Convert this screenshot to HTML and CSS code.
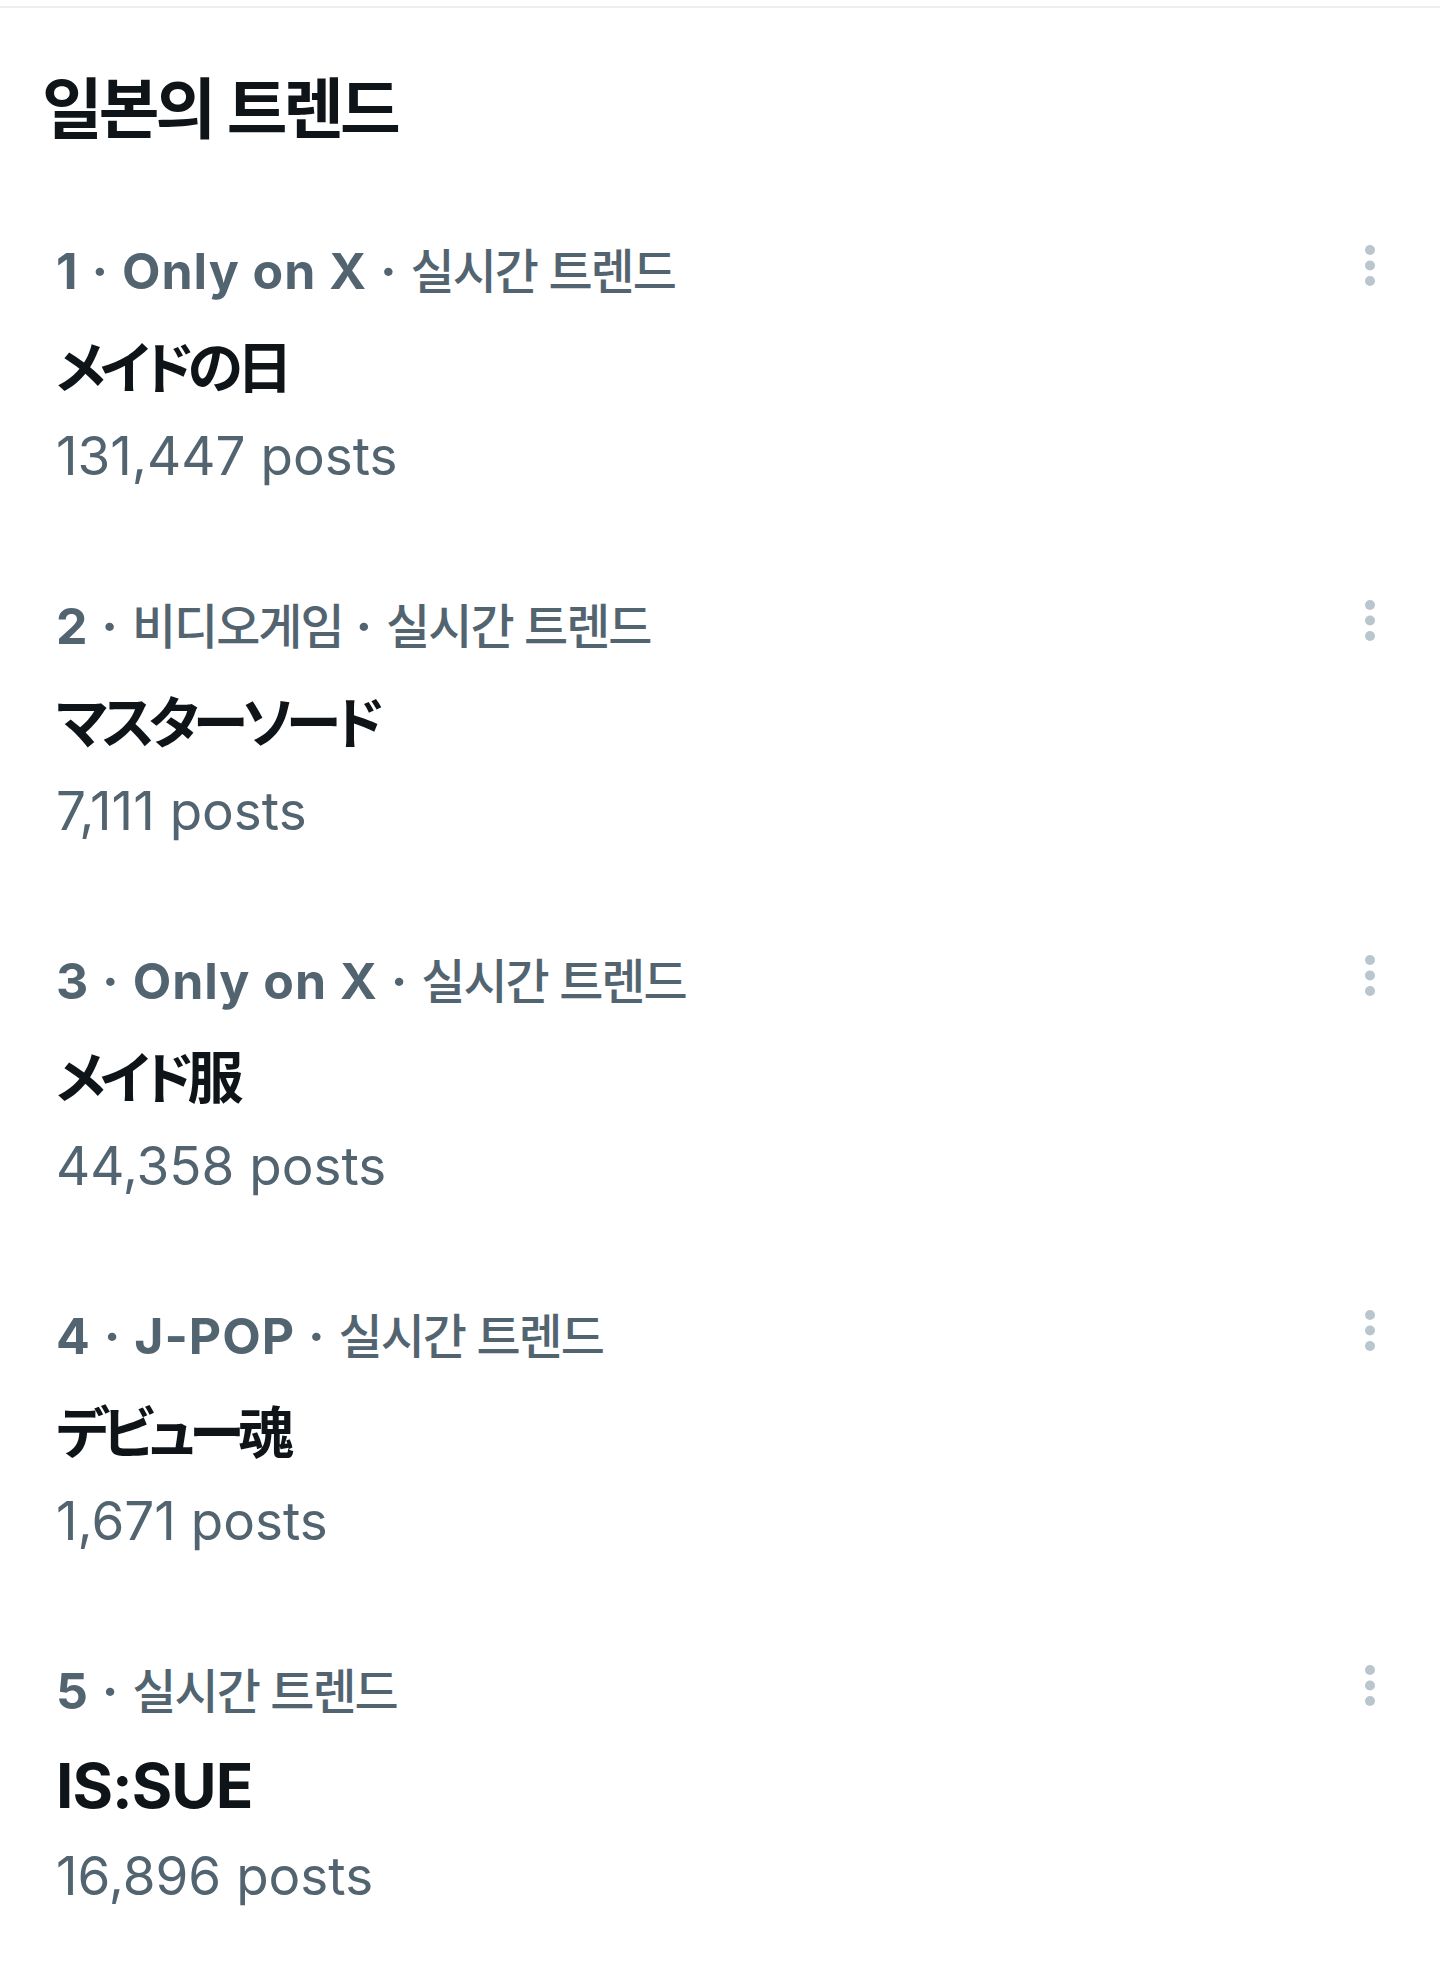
FILE: index.html
```html
<!DOCTYPE html>
<html lang="ko">
<head>
<meta charset="utf-8">
<title>일본의 트렌드</title>
<link rel="stylesheet" href="styles.css">
</head>
<body>
<div class="divider"></div>
<h2 class="heading">일본의 트렌드</h2>
<div class="list">
  <div class="trend">
    <div class="info">
      <div class="meta">1 · Only on X · <span class="ko">실시간 트렌드</span></div>
      <div class="title"><span class="jp">メイドの日</span></div>
      <div class="count">131,447 posts</div>
    </div>
    <svg class="more" viewBox="0 0 20 42" width="20" height="42"><circle cx="10" cy="5" r="5"/><circle cx="10" cy="20.5" r="5"/><circle cx="10" cy="36" r="5"/></svg>
  </div>
  <div class="trend">
    <div class="info">
      <div class="meta">2 · <span class="ko">비디오게임</span> · <span class="ko">실시간 트렌드</span></div>
      <div class="title"><span class="jp">マスターソード</span></div>
      <div class="count">7,111 posts</div>
    </div>
    <svg class="more" viewBox="0 0 20 42" width="20" height="42"><circle cx="10" cy="5" r="5"/><circle cx="10" cy="20.5" r="5"/><circle cx="10" cy="36" r="5"/></svg>
  </div>
  <div class="trend">
    <div class="info">
      <div class="meta">3 · Only on X · <span class="ko">실시간 트렌드</span></div>
      <div class="title"><span class="jp">メイド服</span></div>
      <div class="count">44,358 posts</div>
    </div>
    <svg class="more" viewBox="0 0 20 42" width="20" height="42"><circle cx="10" cy="5" r="5"/><circle cx="10" cy="20.5" r="5"/><circle cx="10" cy="36" r="5"/></svg>
  </div>
  <div class="trend">
    <div class="info">
      <div class="meta">4 · J-POP · <span class="ko">실시간 트렌드</span></div>
      <div class="title"><span class="jp">デビュー魂</span></div>
      <div class="count">1,671 posts</div>
    </div>
    <svg class="more" viewBox="0 0 20 42" width="20" height="42"><circle cx="10" cy="5" r="5"/><circle cx="10" cy="20.5" r="5"/><circle cx="10" cy="36" r="5"/></svg>
  </div>
  <div class="trend">
    <div class="info">
      <div class="meta">5 · <span class="ko">실시간 트렌드</span></div>
      <div class="title">IS:SUE</div>
      <div class="count">16,896 posts</div>
    </div>
    <svg class="more" viewBox="0 0 20 42" width="20" height="42"><circle cx="10" cy="5" r="5"/><circle cx="10" cy="20.5" r="5"/><circle cx="10" cy="36" r="5"/></svg>
  </div>
</div>
</body>
</html>
```
FILE: styles.css
```css
html, body {
  margin: 0;
  padding: 0;
  background: #ffffff;
}
body {
  width: 1440px;
  font-family: "Inter", "Noto Sans CJK KR", sans-serif;
  color: #0f1419;
}
.divider {
  margin-top: 6px;
  height: 2px;
  background: #eceff1;
}
.heading {
  margin: 46px 0 0 0;
  padding-left: 42px;
  font-family: "Noto Sans CJK KR", sans-serif;
  font-size: 66px;
  line-height: 100px;
  font-weight: 700;
  letter-spacing: -4px;
  color: #0f1419;
}
.list {
  display: flex;
  flex-direction: column;
}
.trend {
  display: flex;
  justify-content: space-between;
  align-items: flex-start;
  padding: 69px 60px 11px 56px;
}
.info {
  display: flex;
  flex-direction: column;
}
.meta {
  font-size: 50px;
  line-height: 96px;
  font-weight: 700;
  letter-spacing: 1px;
  color: #536471;
  white-space: nowrap;
}
.ko {
  font-family: "Noto Sans CJK KR", sans-serif;
  font-size: 48px;
  line-height: 1;
  font-weight: 500;
  letter-spacing: -2px;
}
.title {
  font-size: 62px;
  line-height: 93px;
  font-weight: 700;
  letter-spacing: -1px;
  color: #0f1419;
  white-space: nowrap;
}
.jp {
  font-family: "Noto Sans CJK JP", sans-serif;
  font-size: 56px;
  line-height: 1;
  font-weight: 700;
  letter-spacing: -6px;
  font-feature-settings: "palt";
}
.count {
  margin-top: 3px;
  font-size: 53px;
  line-height: 83px;
  font-weight: 400;
  color: #536471;
  white-space: nowrap;
}
.more {
  margin-top: 22px;
  fill: #bac6cd;
  flex-shrink: 0;
}
```
